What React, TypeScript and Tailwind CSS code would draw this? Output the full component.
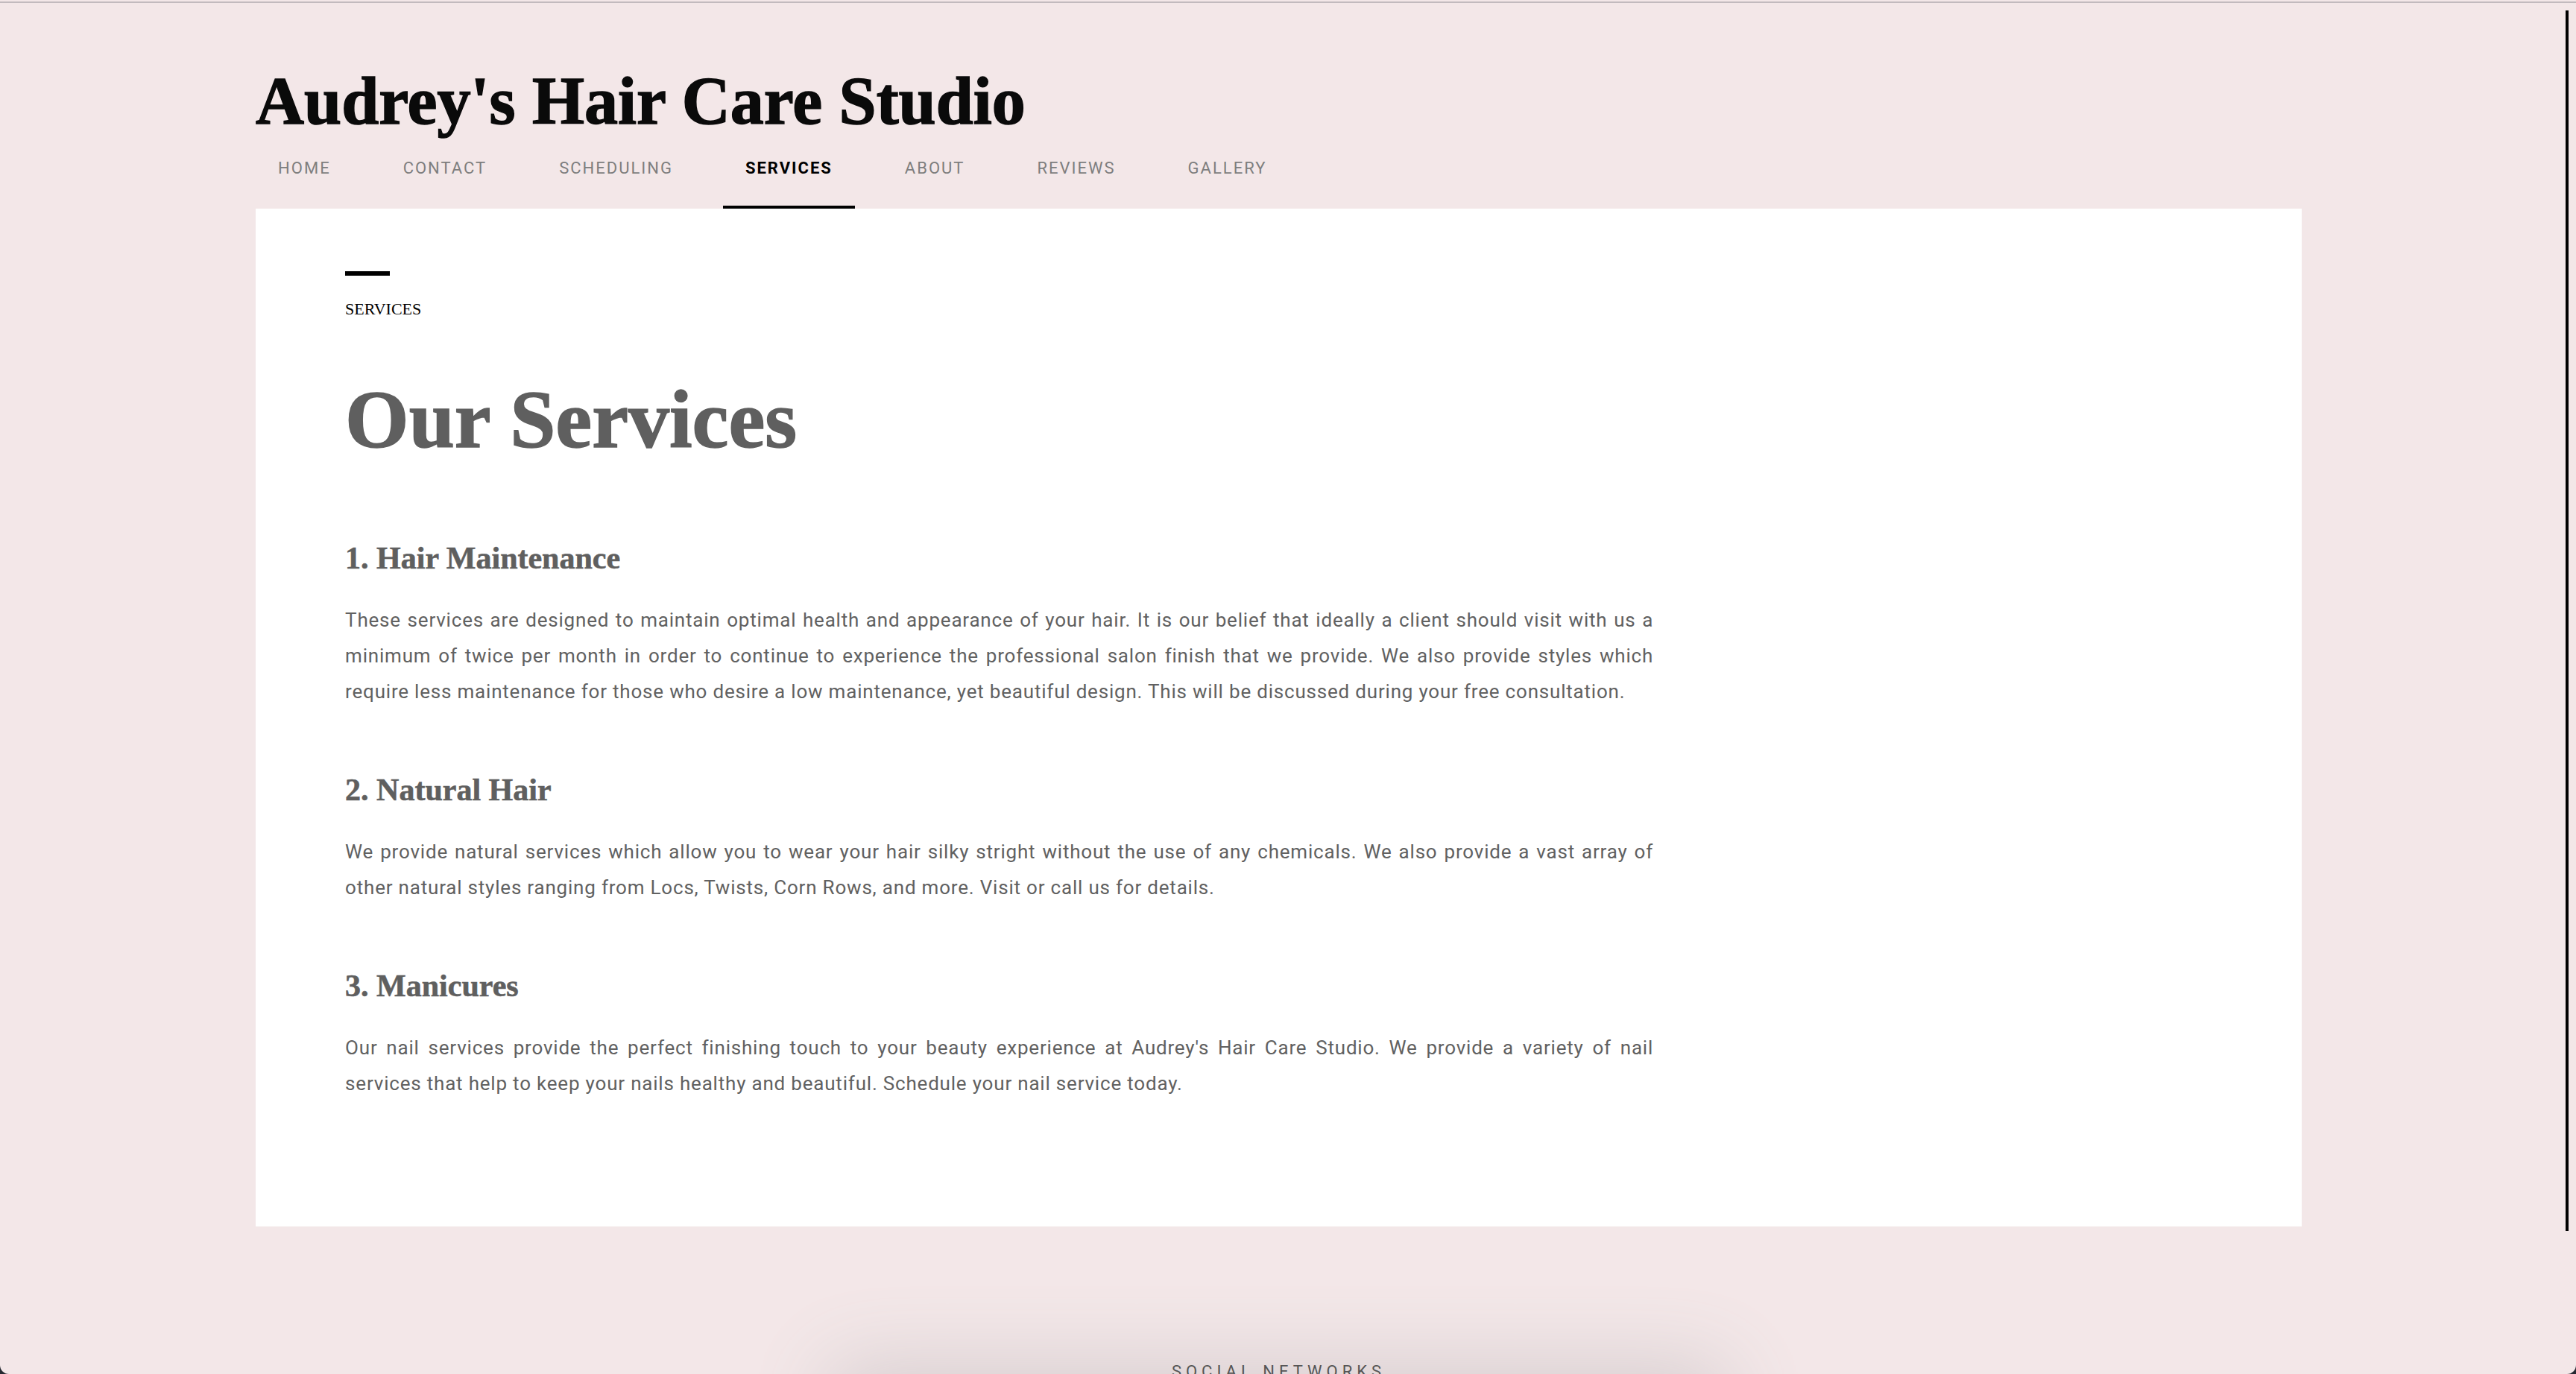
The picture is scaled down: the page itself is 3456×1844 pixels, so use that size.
import React from "react";

const serif = { fontFamily: '"Liberation Serif", "Times New Roman", serif' };

const navItems = ["HOME", "CONTACT", "SCHEDULING", "SERVICES", "ABOUT", "REVIEWS", "GALLERY"];

const sections = [
  {
    title: "1. Hair Maintenance",
    text: "These services are designed to maintain optimal health and appearance of your hair. It is our belief that ideally a client should visit with us a minimum of twice per month in order to continue to experience the professional salon finish that we provide. We also provide styles which require less maintenance for those who desire a low maintenance, yet beautiful design. This will be discussed during your free consultation.",
  },
  {
    title: "2. Natural Hair",
    text: "We provide natural services which allow you to wear your hair silky stright without the use of any chemicals. We also provide a vast array of other natural styles ranging from Locs, Twists, Corn Rows, and more. Visit or call us for details.",
  },
  {
    title: "3. Manicures",
    text: "Our nail services provide the perfect finishing touch to your beauty experience at Audrey's Hair Care Studio. We provide a variety of nail services that help to keep your nails healthy and beautiful. Schedule your nail service today.",
  },
];

export default function App() {
  return (
    <div className="h-[1844px] w-[3456px] overflow-hidden bg-[#262931]">
      <div className="flex h-full flex-col overflow-hidden rounded-b-[12px] bg-[#f3e7e8]">
        <div className="h-[2px] shrink-0" />
        <div className="h-[2px] shrink-0 bg-[#c2babe]" />
        <div className="flex min-h-0 flex-1">
          <main className="min-w-0 flex-1" style={{ fontFamily: "Roboto, sans-serif" }}>
            <div className="mx-auto w-[80%]">
              <header className="pt-[87px]">
                <h1
                  className="text-[90px] font-bold leading-none text-[#0a0a0a] [-webkit-text-stroke:1.5px_#0a0a0a]"
                  style={serif}
                >
                  Audrey's Hair Care Studio
                </h1>
                <nav className="flex gap-[37px]">
                  {navItems.map((n) => (
                    <div
                      key={n}
                      className={
                        n === "SERVICES"
                          ? "border-b-4 border-black px-[30px] pt-[28px] pb-[34px] text-[22px] leading-[33px] font-bold tracking-[2px] text-black"
                          : "border-b-4 border-transparent px-[30px] pt-[28px] pb-[34px] text-[22px] leading-[33px] tracking-[2px] text-[#7e7e7e]"
                      }
                    >
                      {n}
                    </div>
                  ))}
                </nav>
              </header>
              <section className="h-[1366px] bg-white pl-[120px] pt-[84px]">
                <div className="h-[6px] w-[60px] bg-black" />
                <div className="mt-[28px] text-[22px] leading-[33px] text-black" style={serif}>
                  SERVICES
                </div>
                <h2
                  className="mt-[77px] text-[110px] font-bold leading-none text-[#5f5f5f] [-webkit-text-stroke:1.5px_#5f5f5f]"
                  style={serif}
                >
                  Our Services
                </h2>
                <div className="w-[1755px] pt-[110px]">
                  {sections.map((s, i) => (
                    <div key={s.title} className={i === 0 ? "" : "mt-[87px]"}>
                      <h3
                        className="text-[42px] font-bold leading-none text-[#5f5f5f] [-webkit-text-stroke:0.6px_#5f5f5f]"
                        style={serif}
                      >
                        {s.title}
                      </h3>
                      <p className="mt-[38px] text-justify text-[26px] leading-[48px] tracking-[0.8px] text-[#616161]">
                        {s.text}
                      </p>
                    </div>
                  ))}
                </div>
              </section>
              <div className="mt-[178px] text-center text-[22px] leading-[33px] tracking-[6px] text-[#555]">
                SOCIAL NETWORKS
              </div>
              <div className="mx-auto h-[200px] w-[1150px] bg-[#d6cdcf] shadow-[0_0_110px_25px_#d6cdcf]" />
            </div>
          </main>
          <div className="w-[25px] shrink-0 pt-[10px]">
            <div className="ml-[11px] h-[1638px] w-[4px] bg-black" />
          </div>
        </div>
      </div>
    </div>
  );
}
